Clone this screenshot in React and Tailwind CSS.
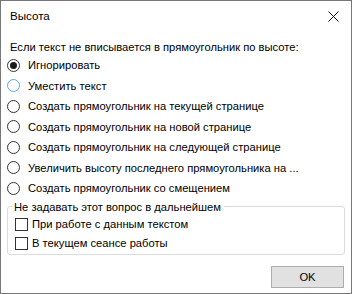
import React from 'react'

const options = [
  'Игнорировать',
  'Уместить текст',
  'Создать прямоугольник на текущей странице',
  'Создать прямоугольник на новой странице',
  'Создать прямоугольник на следующей странице',
  'Увеличить высоту последнего прямоугольника на ...',
  'Создать прямоугольник со смещением',
]

export default function App() {
  return (
    <div className="w-[352px] h-[294px] border border-[#777] bg-white text-[11.2px] leading-[16px] text-black font-['Liberation_Sans',sans-serif] flex flex-col">
      {/* Title bar */}
      <div className="h-[30px] flex items-center justify-between pl-[9px] pr-[12px] shrink-0">
        <span className="text-[11.6px]">Высота</span>
        <svg width="11" height="11" viewBox="0 0 11 11" className="text-[#111]">
          <path d="M0.5 0.5 L10.5 10.5 M10.5 0.5 L0.5 10.5" stroke="currentColor" strokeWidth="1" />
        </svg>
      </div>

      <div className="px-[6px] flex flex-col">
        <div className="mt-[8px] pl-[3px] h-[16px]">Если текст не вписывается в прямоугольник по высоте:</div>

        <div className="flex flex-col">
          {options.map((o, i) => (
            <Radio key={o} label={o} checked={i === 0} focus={i === 1} />
          ))}
        </div>

        <fieldset className="border border-[#dcdcdc] rounded-[3px] px-0 pb-[1px] m-0 min-w-0">
          <legend className="ml-[5px] pl-[1px] pr-[3px]">Не задавать этот вопрос в дальнейшем</legend>
          <Check label="При работе с данным текстом" />
          <Check label="В текущем сеансе работы" />
        </fieldset>

        <div className="flex justify-end mt-[11px] pr-[1px]">
          <button className="w-[73px] h-[22px] bg-[#e1e1e1] border border-[#adadad] flex items-center justify-center">
            OK
          </button>
        </div>
      </div>
    </div>
  )
}

function Radio({ label, checked, focus }) {
  return (
    <div className="h-[20.5px] flex items-center">
      <span className={`w-[13px] h-[13px] rounded-full border flex items-center justify-center shrink-0 ${
        focus ? 'border-[#5fa4ea]' : 'border-[#333]'
      }`}>
        {checked && <span className="w-[7px] h-[7px] rounded-full bg-[#1a1a1a]" />}
      </span>
      <span className="ml-[8px] whitespace-nowrap">{label}</span>
    </div>
  )
}

function Check({ label }) {
  return (
    <div className="h-[19px] flex items-center pl-[7px] gap-[4px]">
      <span className="w-[13px] h-[13px] border border-[#333] bg-white shrink-0" />
      <span>{label}</span>
    </div>
  )
}
